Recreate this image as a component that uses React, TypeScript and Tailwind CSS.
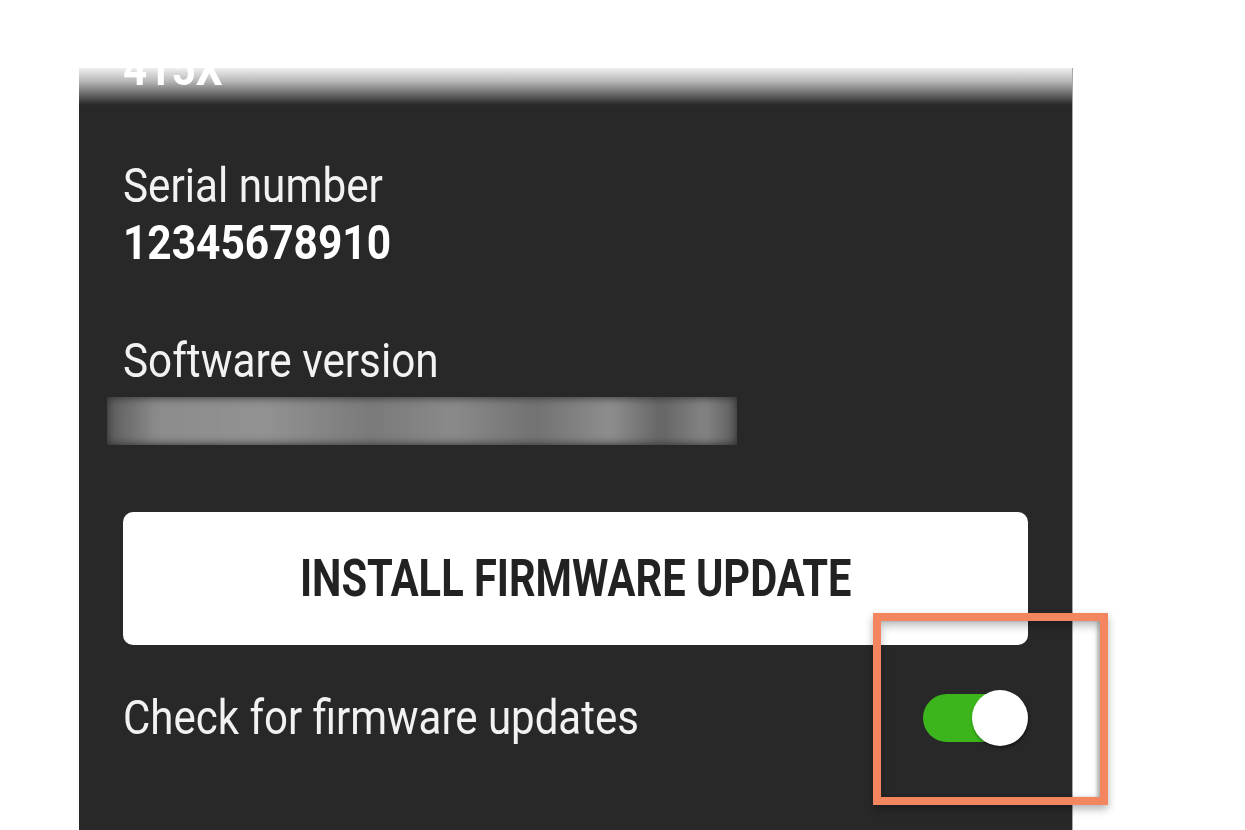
import React from "react";

export default function App() {
  return (
    <div className="relative w-full h-[830px] bg-white overflow-hidden font-['Roboto',sans-serif]">
      <div className="ml-[79px] mt-[68px] w-[994px] h-[762px] bg-[#282828] border-r border-[#a8a8a8] flex flex-col">
        <div className="h-[37px] overflow-hidden bg-[linear-gradient(to_bottom,#efefef_0%,#b9b9b9_35%,#6a6a6a_70%,#282828_100%)] pl-[44px]">
          <div className="mt-[-23px] text-[48px] leading-[48px] font-bold text-white">
            <span className="inline-block origin-left scale-x-[0.88]">415X</span>
          </div>
        </div>

        <div className="flex flex-col px-[44px]">
          <div className="mt-[57px] text-[48px] leading-[48px] text-[#f2f2f2]">
            <span className="inline-block origin-left scale-x-[0.88]">Serial number</span>
          </div>
          <div className="mt-[9px] text-[48px] leading-[48px] font-bold text-white">
            <span className="inline-block origin-left scale-x-[0.885]">12345678910</span>
          </div>

          <div className="mt-[70px] text-[48px] leading-[48px] text-[#f2f2f2]">
            <span className="inline-block origin-left scale-x-[0.88]">Software version</span>
          </div>
          <div className="mt-[12px] ml-[-16px] w-[630px] h-[48px] overflow-hidden">
            <div className="w-full h-full blur-[5px] bg-[linear-gradient(to_right,#5a5a5a_0%,#8c8c8c_8%,#929292_25%,#7a7a7a_42%,#8a8a8a_55%,#727272_68%,#8e8e8e_80%,#656565_88%,#858585_95%,#5a5a5a_100%)]" />
          </div>

          <div className="mt-[67px] h-[133px] w-full rounded-[10px] bg-white flex items-center justify-center">
            <span className="inline-block origin-center scale-x-[0.8] text-[52px] leading-[52px] font-bold text-[#222222]">
              INSTALL FIRMWARE UPDATE
            </span>
          </div>

          <div className="mt-[45px] h-[56px] flex items-center justify-between">
            <div className="text-[48px] leading-[48px] text-[#f2f2f2]">
              <span className="inline-block origin-left scale-x-[0.875]">Check for firmware updates</span>
            </div>
            <div className="relative w-[105px] h-[56px]">
              <div className="absolute left-0 top-[4px] w-[92px] h-[48px] rounded-full bg-[#3cb41c]" />
              <div className="absolute right-0 top-0 w-[56px] h-[56px] rounded-full bg-white shadow-[1px_2px_3px_rgba(0,0,0,0.45)]" />
            </div>
          </div>
        </div>
      </div>

      <div className="absolute left-[873px] top-[613px] w-[235px] h-[192px] border-[8px] border-[#f4865f] shadow-[0_4px_8px_rgba(0,0,0,0.3),inset_0_5px_8px_rgba(0,0,0,0.25),inset_-3px_0_3px_rgba(0,0,0,0.2)]" />
    </div>
  );
}
